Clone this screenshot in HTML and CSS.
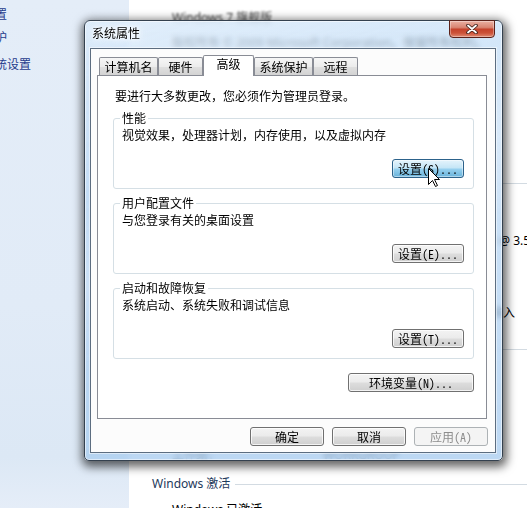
FILE: index.html
```html
<!DOCTYPE html>
<html lang="zh-CN">
<head>
    <meta charset="UTF-8">
    <title>系统属性</title>
    <link rel="stylesheet" href="styles.css">
</head>
<body>
<div class="desktop">

    <!-- Control panel: left pane -->
    <aside class="nav">
        <ul class="nav-links">
            <li>远程设置</li>
            <li>系统保护</li>
            <li class="nav-gap">高级系统设置</li>
        </ul>
    </aside>

    <!-- Control panel: system page -->
    <main class="sys">
        <p class="item edition">Windows 7 旗舰版</p>
        <p class="item copyright">版权所有 © 2009 Microsoft Corporation。保留所有权利。</p>

        <h3 class="sect-head sect-sys"><span>系统</span><i></i></h3>
        <div class="row first"><span class="key">分级：</span><span class="val">系统分级不可用</span></div>
        <div class="row"><span class="key">处理器：</span><span class="val">Intel(R) Core(TM) i7-4770K CPU @ 3.50GHz</span></div>
        <div class="row"><span class="key">安装内存(RAM)：</span><span class="val">8.00 GB</span></div>
        <div class="row"><span class="key">系统类型：</span><span class="val">64 位操作系统</span></div>
        <div class="row"><span class="key">笔和触摸：</span><span class="val">没有可用于此显示器的笔或触控输入</span></div>

        <h3 class="sect-head sect-name"><span>计算机名称、域和工作组设置</span><i></i></h3>
        <div class="row first"><span class="key">计算机名：</span><span class="val">PC-20140101</span></div>
        <div class="row"><span class="key">计算机全名：</span><span class="val">PC-20140101</span></div>
        <div class="row"><span class="key">计算机描述：</span><span class="val"></span></div>
        <div class="row"><span class="key">工作组：</span><span class="val">WORKGROUP</span></div>

        <h3 class="sect-head sect-act"><span>Windows 激活</span><i></i></h3>
        <p class="item activated">Windows 已激活</p>
    </main>

    <!-- System properties dialog -->
    <div class="dialog">
        <div class="titlebar">
            <span class="title">系统属性</span>
            <span class="close-btn">
                <svg width="12" height="10" viewBox="0 0 12 10">
                    <path d="M2 1.5 L10 8.5 M10 1.5 L2 8.5" stroke="#40201a" stroke-width="3.6" stroke-linecap="round"/>
                    <path d="M2 1.5 L10 8.5 M10 1.5 L2 8.5" stroke="#fff" stroke-width="1.8" stroke-linecap="round"/>
                </svg>
            </span>
        </div>

        <div class="client">
            <div class="tabs">
                <span class="tab">计算机名</span>
                <span class="tab">硬件</span>
                <span class="tab active">高级</span>
                <span class="tab">系统保护</span>
                <span class="tab">远程</span>
            </div>

            <div class="panel">
                <p class="notice">要进行大多数更改，您必须作为管理员登录。</p>

                <fieldset class="group">
                    <legend>性能</legend>
                    <p>视觉效果，处理器计划，内存使用，以及虚拟内存</p>
                    <div class="btn-row"><button class="btn hot">设置(S)...</button></div>
                </fieldset>

                <fieldset class="group">
                    <legend>用户配置文件</legend>
                    <p>与您登录有关的桌面设置</p>
                    <div class="btn-row"><button class="btn">设置(E)...</button></div>
                </fieldset>

                <fieldset class="group">
                    <legend>启动和故障恢复</legend>
                    <p>系统启动、系统失败和调试信息</p>
                    <div class="btn-row"><button class="btn">设置(T)...</button></div>
                </fieldset>

                <div class="btn-row env-row"><button class="btn env">环境变量(N)...</button></div>
            </div>

            <div class="dlg-buttons">
                <button class="btn wide">确定</button>
                <button class="btn wide">取消</button>
                <button class="btn wide" disabled>应用(A)</button>
            </div>
        </div>
    </div>

    <!-- Mouse pointer over the performance button -->
    <svg class="cursor" width="13" height="20" viewBox="0 0 13 20">
        <path d="M0.5 0.5 V16.5 L4.5 12.5 L7.5 18.5 L9.5 17.5 L6.5 11.5 H11.5 Z" fill="#fff" stroke="#000" stroke-width="1" stroke-linejoin="miter"/>
    </svg>

</div>
</body>
</html>
```

FILE: styles.css
```css
* {
    margin: 0;
    padding: 0;
    box-sizing: border-box;
}

body {
    font-family: "Noto Sans", "Noto Sans CJK SC", sans-serif;
    font-size: 12px;
    color: #000;
    background: #fff;
}

.desktop {
    position: relative;
    display: flex;
    width: 527px;
    height: 508px;
    overflow: hidden;
}

/* Left pane */
.nav {
    flex: none;
    width: 129px;
    background: linear-gradient(180deg, #e4edf8 0%, #e1ebf7 60%, #dce8f5 90%, #e5edf8 100%);
}

.nav-links {
    list-style: none;
    margin: 8px 0 0 -41px;
    color: #1f3b8c;
    line-height: 14px;
    white-space: nowrap;
}

.nav-links li {
    margin-bottom: 9px;
}

.nav-links .nav-gap {
    margin-top: 13px;
}

/* System page */
.sys {
    flex: 1;
    padding: 11px 0 0 23px;
    background: #fff;
    white-space: nowrap;
    line-height: 14px;
}

.item {
    margin-left: 20px;
}

/* seen through the glass frame of the dialog */
.edition {
    filter: blur(1.2px);
    opacity: 0.8;
}

.copyright {
    margin-top: 11px;
}

.sect-head {
    display: flex;
    align-items: center;
    gap: 5px;
    font-size: 12px;
    font-weight: normal;
    color: #1e395b;
}

.sect-head i {
    flex: 1;
    height: 1px;
    background: #d3dbe2;
}

.sect-sys { margin-top: 126px; }
.sect-name { margin-top: 22px; }
.sect-act { margin-top: 15px; }

.activated {
    margin-top: 12px;
}

.row {
    display: flex;
    margin: 10px 0 0 20px;
}

.row.first {
    margin-top: 20px;
}

.key {
    width: 151px;
    flex: none;
}

/* Dialog window */
.dialog {
    position: absolute;
    left: 84px;
    top: 20px;
    width: 419px;
    height: 441px;
    display: flex;
    flex-direction: column;
    padding: 0 6px 7px 5px;
    border: 1px solid #34414f;
    border-radius: 6px 6px 5px 5px;
    background:
        linear-gradient(160deg, rgba(255, 255, 255, 0.3) 0%, rgba(255, 255, 255, 0) 30%, rgba(255, 255, 255, 0.2) 45%, rgba(255, 255, 255, 0) 60%),
        linear-gradient(180deg, rgba(196, 222, 247, 0.72) 0%, rgba(172, 206, 240, 0.8) 100%);
    backdrop-filter: blur(2.5px);
    box-shadow: inset 0 0 0 1px rgba(255, 255, 255, 0.55), 1px 3px 10px 3px rgba(0, 0, 0, 0.6);
    font-family: "Noto Sans Mono CJK SC", "Noto Sans CJK SC", monospace;
}

.titlebar {
    flex: none;
    height: 27px;
    display: flex;
    justify-content: space-between;
    align-items: flex-start;
    padding-left: 2px;
}

.title {
    margin-top: 5px;
    line-height: 14px;
    font-family: "Noto Sans CJK SC", sans-serif;
    text-shadow: 0 0 6px #fff, 0 0 10px #fff, 0 0 3px #fff;
}

.close-btn {
    width: 46px;
    height: 18px;
    margin: -1px 1px 0 0;
    display: flex;
    align-items: center;
    justify-content: center;
    border: 1px solid #5b2119;
    border-radius: 0 0 4px 4px;
    background: linear-gradient(180deg, #eab0a2 0%, #d88572 40%, #c5432c 52%, #cc5238 75%, #e08a72 100%);
    box-shadow: inset 0 0 0 1px rgba(255, 255, 255, 0.35);
}

.client {
    flex: 1;
    padding: 6px 8px 0 6px;
    border: 1px solid #5c6d80;
    background: #fcfcfc;
    box-shadow: 0 0 0 1px rgba(255, 255, 255, 0.5);
}

/* Tabs */
.tabs {
    display: flex;
    align-items: flex-end;
    height: 20px;
    padding-left: 2px;
}

.tab {
    min-width: 45px;
    height: 18px;
    padding: 0 4.5px;
    text-align: center;
    line-height: 17px;
    border: 1px solid #898c95;
    border-bottom: none;
    border-radius: 2px 2px 0 0;
    background: linear-gradient(180deg, #f6f6f6 0%, #ececec 50%, #dfdfdf 55%, #d3d3d3 100%);
}

.tab.active {
    position: relative;
    z-index: 1;
    min-width: 51px;
    height: 21px;
    margin-bottom: -1px;
    line-height: 15px;
    background: #fff;
}

.panel {
    height: 344px;
    padding: 13px 12px 0 15px;
    border: 1px solid #898c95;
    background: #fff;
    line-height: 14px;
}

.notice {
    padding-left: 2px;
}

/* Group boxes */
.group {
    margin-top: 7px;
    padding: 3px 9px 10px 8px;
    border: 1px solid #d5dfe5;
    border-radius: 3px;
}

.notice + .group {
    margin-top: 8px;
}

.group legend {
    padding: 0 2px;
    margin-left: -2px;
    line-height: 14px;
}

.btn-row {
    display: flex;
    justify-content: flex-end;
    margin-top: 17px;
}

.env-row {
    margin-top: 14px;
}

/* Buttons */
.btn {
    width: 72px;
    height: 19px;
    font-family: inherit;
    font-size: 12px;
    line-height: 17px;
    color: #000;
    border: 1px solid #707070;
    border-radius: 3px;
    background: linear-gradient(180deg, #f3f3f3 0%, #ebebeb 48%, #dddddd 52%, #cfcfcf 100%);
    box-shadow: inset 0 0 0 1px rgba(255, 255, 255, 0.75);
}

.btn.hot {
    border-color: #2c628b;
    background: linear-gradient(180deg, #e5f4fc 0%, #c4e5f6 48%, #98d1ef 52%, #68b3db 100%);
    box-shadow: inset 0 0 0 1px rgba(255, 255, 255, 0.45);
}

.btn.env {
    width: 126px;
}

.btn.wide {
    width: 74px;
}

.btn:disabled {
    color: #8d8d8d;
    border-color: #adb2b5;
    background: #f4f4f4;
    box-shadow: none;
}

.dlg-buttons {
    display: flex;
    justify-content: flex-end;
    gap: 8px;
    margin: 8px -1px 0 0;
}

.cursor {
    position: absolute;
    left: 428px;
    top: 168px;
}
```
